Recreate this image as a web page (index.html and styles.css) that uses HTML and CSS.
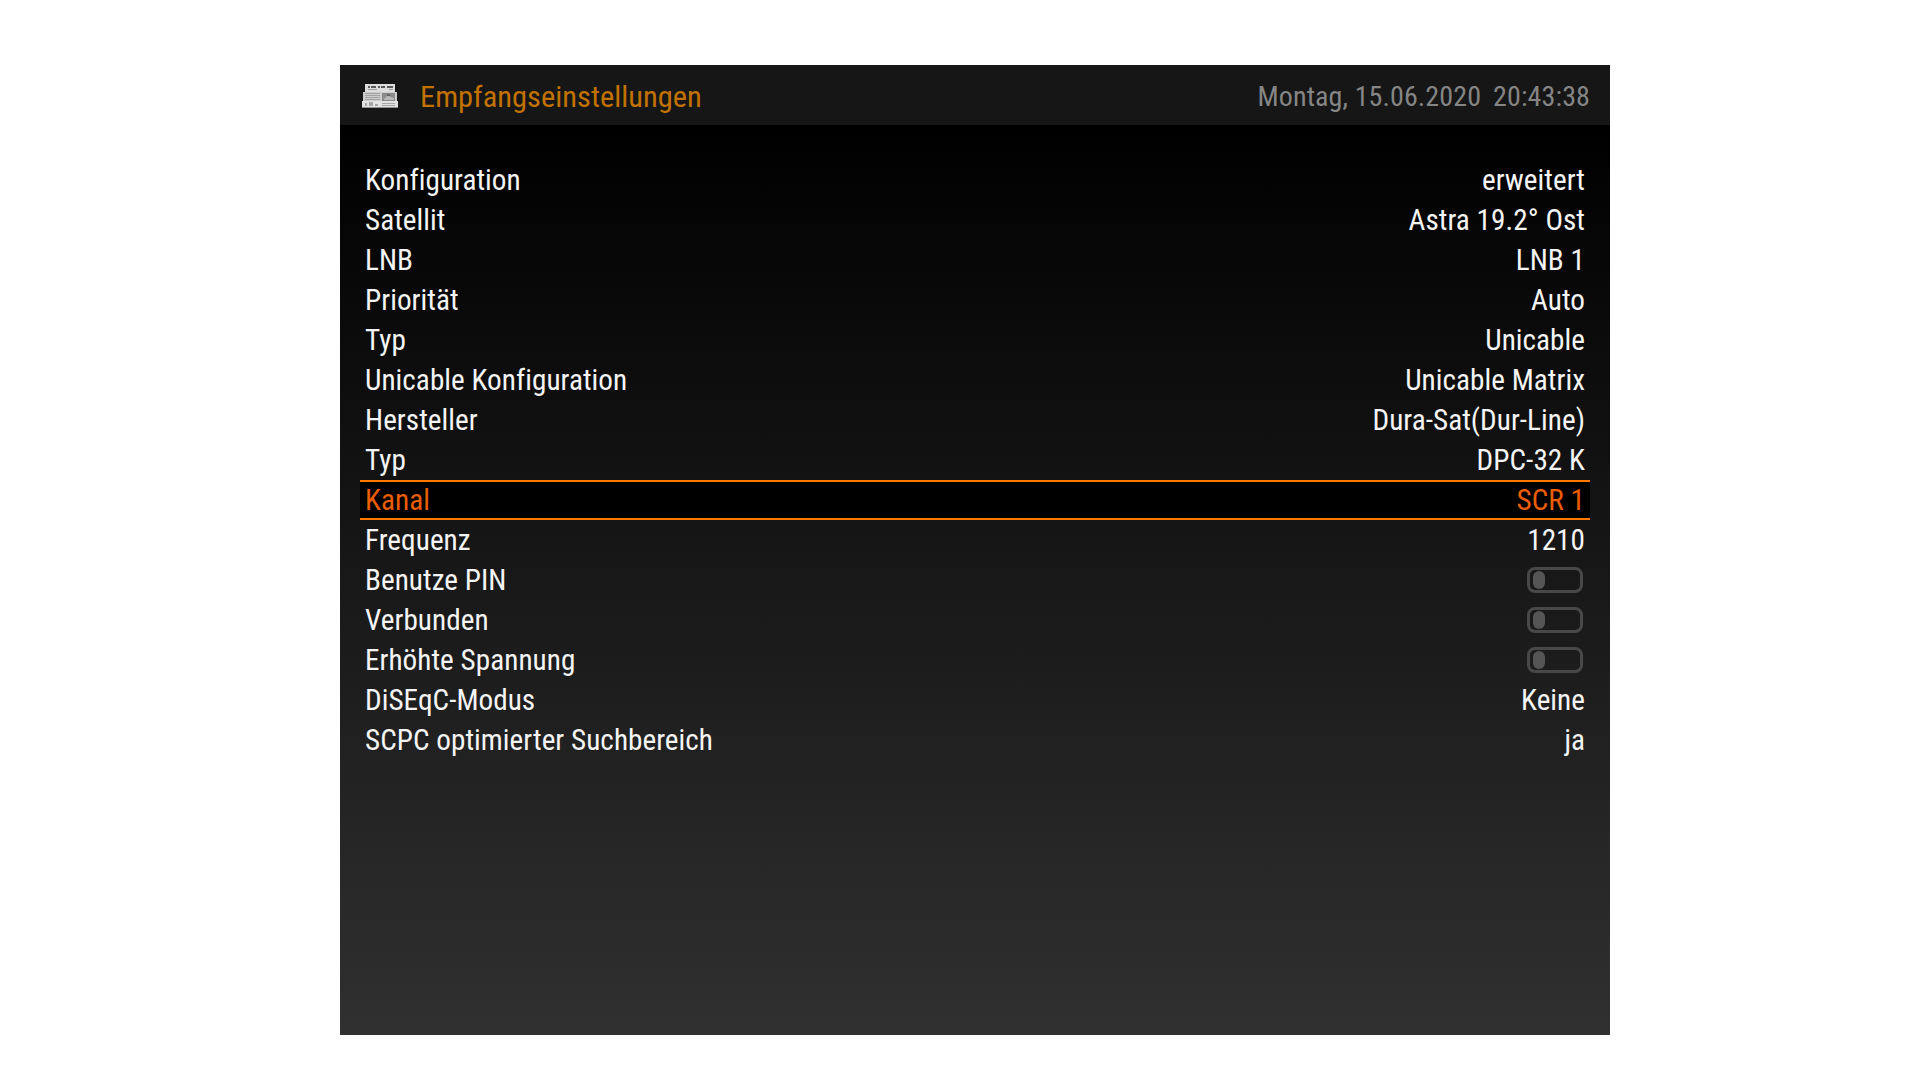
FILE: index.html
```html
<!DOCTYPE html>
<html lang="de">
<head>
<meta charset="utf-8">
<title>Empfangseinstellungen</title>
<link rel="stylesheet" href="styles.css">
</head>
<body>
<main class="panel">
  <header class="head">
    <svg class="icon" viewBox="0 0 36 24" width="36" height="24" aria-hidden="true">
      <path d="M3 0h30v9H3z" fill="#dcdcdc"/>
      <path d="M6 2h2v2H6zM9 2h5v2H9zM16 2h2v2h-2zM19 2h4v2h-4zM25 2h6v2h-6z" fill="#5a5a5a"/>
      <path d="M6 5h9v1H6zM27 5h4v1h-4z" fill="#9c9c9c"/>
      <path d="M1 8h34v11H1z" fill="#cdcdcd"/>
      <path d="M3 9h15v1H3zM3 11h15v1H3zM3 13h15v1H3zM3 15h15v1H3z" fill="#a2a2a2"/>
      <path d="M20 9h13v8H20z" fill="#8a8a8a"/>
      <path d="M22 15l4-4 3 2 3 1v2H22z" fill="#b8b8b8"/>
      <path d="M25 10h3v2h-3z" fill="#666"/>
      <path d="M0 17h36v7H0z" fill="#e2e2e2"/>
      <path d="M0 23h36v1H0z" fill="#909090"/>
      <path d="M3 19h2v3H3zM7 18h4v4H7zM13 20h3v2h-3zM20 19h13v1H20zM20 21h13v1H20z" fill="#a6a6a6"/>
    </svg>
    <h1 class="title">Empfangseinstellungen</h1>
    <div class="clock"><span>Montag, 15.06.2020</span><span>20:43:38</span></div>
  </header>
  <ul class="list">
    <li class="row"><span>Konfiguration</span><span>erweitert</span></li>
    <li class="row"><span>Satellit</span><span>Astra 19.2° Ost</span></li>
    <li class="row"><span>LNB</span><span>LNB 1</span></li>
    <li class="row"><span>Priorität</span><span>Auto</span></li>
    <li class="row"><span>Typ</span><span>Unicable</span></li>
    <li class="row"><span>Unicable Konfiguration</span><span>Unicable Matrix</span></li>
    <li class="row"><span>Hersteller</span><span>Dura-Sat(Dur-Line)</span></li>
    <li class="row"><span>Typ</span><span>DPC-32 K</span></li>
    <li class="row selected"><span>Kanal</span><span>SCR 1</span></li>
    <li class="row"><span>Frequenz</span><span>1210</span></li>
    <li class="row"><span>Benutze PIN</span><i class="toggle"></i></li>
    <li class="row"><span>Verbunden</span><i class="toggle"></i></li>
    <li class="row"><span>Erhöhte Spannung</span><i class="toggle"></i></li>
    <li class="row"><span>DiSEqC-Modus</span><span>Keine</span></li>
    <li class="row"><span>SCPC optimierter Suchbereich</span><span>ja</span></li>
  </ul>
</main>
</body>
</html>
```
FILE: styles.css
```css
* { box-sizing: border-box; }
html, body { margin: 0; height: 100%; background: #fff; }
body { padding: 65px 310px 45px 340px; font-family: Roboto, "Liberation Sans", sans-serif; font-stretch: 75%; font-variant-ligatures: none; }
.panel { width: 1270px; height: 970px; display: flex; flex-direction: column; background: linear-gradient(#000 60px, #303030 100%); }
.head { height: 60px; flex: none; background: #161616; display: flex; align-items: center; padding: 0 20px 0 22px; }
.icon { flex: none; margin-top: 2px; filter: blur(.4px); }
.title { margin: 3px 0 0 22px; font-size: 30.4px; font-weight: 370; letter-spacing: .03px; color: #c27200; flex: 1; }
.clock { display: flex; gap: 12px; margin-top: 3px; font-size: 28px; font-weight: 370; letter-spacing: .11px; color: #858585; }
.list { list-style: none; margin: 0; padding: 35px 20px 0 20px; }
.row { height: 40px; display: flex; justify-content: space-between; align-items: center; padding: 0 5px; font-size: 29.2px; font-weight: 370; letter-spacing: .04px; color: #f4f4f4; }
.selected { background: #000; color: #ea5d00; border-top: 2px solid #ff7800; border-bottom: 2px solid #ff7800; }
.toggle { width: 56px; height: 26px; margin-right: 2px; border: 3px solid #484848; border-radius: 8px; position: relative; display: block; }
.toggle::before { content: ""; position: absolute; left: 3px; top: 1px; width: 12px; height: 18px; border-radius: 6px; background: #555; }
```
